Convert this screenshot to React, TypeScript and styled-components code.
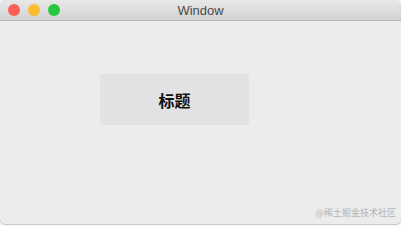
import styled, { createGlobalStyle } from "styled-components";

const GlobalStyle = createGlobalStyle`
  html, body {
    margin: 0;
    padding: 0;
    background: #f6f6f6;
  }
  #root {
    width: 401px;
    height: 226px;
  }
`;

const Window = styled.div`
  width: 401px;
  height: 224px;
  display: flex;
  flex-direction: column;
  background: #ececec;
  border-radius: 5px;
  overflow: hidden;
  box-shadow: 0 1px 0 #c8c8c8;
  font-family: "Liberation Sans", "Noto Sans CJK SC", sans-serif;
`;

const TitleBar = styled.div`
  position: relative;
  height: 20px;
  flex-shrink: 0;
  display: flex;
  align-items: center;
  justify-content: center;
  background: linear-gradient(#e8e8e8, #d3d3d3);
  border-bottom: 1px solid #b5b5b5;
`;

const Lights = styled.div`
  position: absolute;
  left: 8px;
  top: 4px;
  display: flex;
  gap: 8px;
`;

const Light = styled.span<{ color: string }>`
  width: 12px;
  height: 12px;
  border-radius: 50%;
  background: ${(props) => props.color};
`;

const Title = styled.div`
  font-size: 13px;
  color: #4a4a4a;
`;

const Body = styled.div`
  flex: 1;
  padding: 53px 0 0 100px;
  position: relative;
`;

const Heading = styled.div`
  width: 149px;
  height: 51px;
  display: flex;
  align-items: center;
  justify-content: center;
  background: #e2e2e4;
  border-radius: 3px;
  font-family: "Noto Sans CJK SC", sans-serif;
  font-weight: bold;
  font-size: 16px;
  color: #111;
`;

const Watermark = styled.div`
  position: absolute;
  right: 5px;
  bottom: 5px;
  font-family: "Noto Sans CJK SC", sans-serif;
  font-size: 9px;
  color: #b4b4b4;
`;

export default function App() {
  return (
    <>
      <GlobalStyle />
      <Window>
        <TitleBar>
          <Lights>
            <Light color="#fc5f57" />
            <Light color="#fdbc2e" />
            <Light color="#29c740" />
          </Lights>
          <Title>Window</Title>
        </TitleBar>
        <Body>
          <Heading>标题</Heading>
          <Watermark>@稀土掘金技术社区</Watermark>
        </Body>
      </Window>
    </>
  );
}
